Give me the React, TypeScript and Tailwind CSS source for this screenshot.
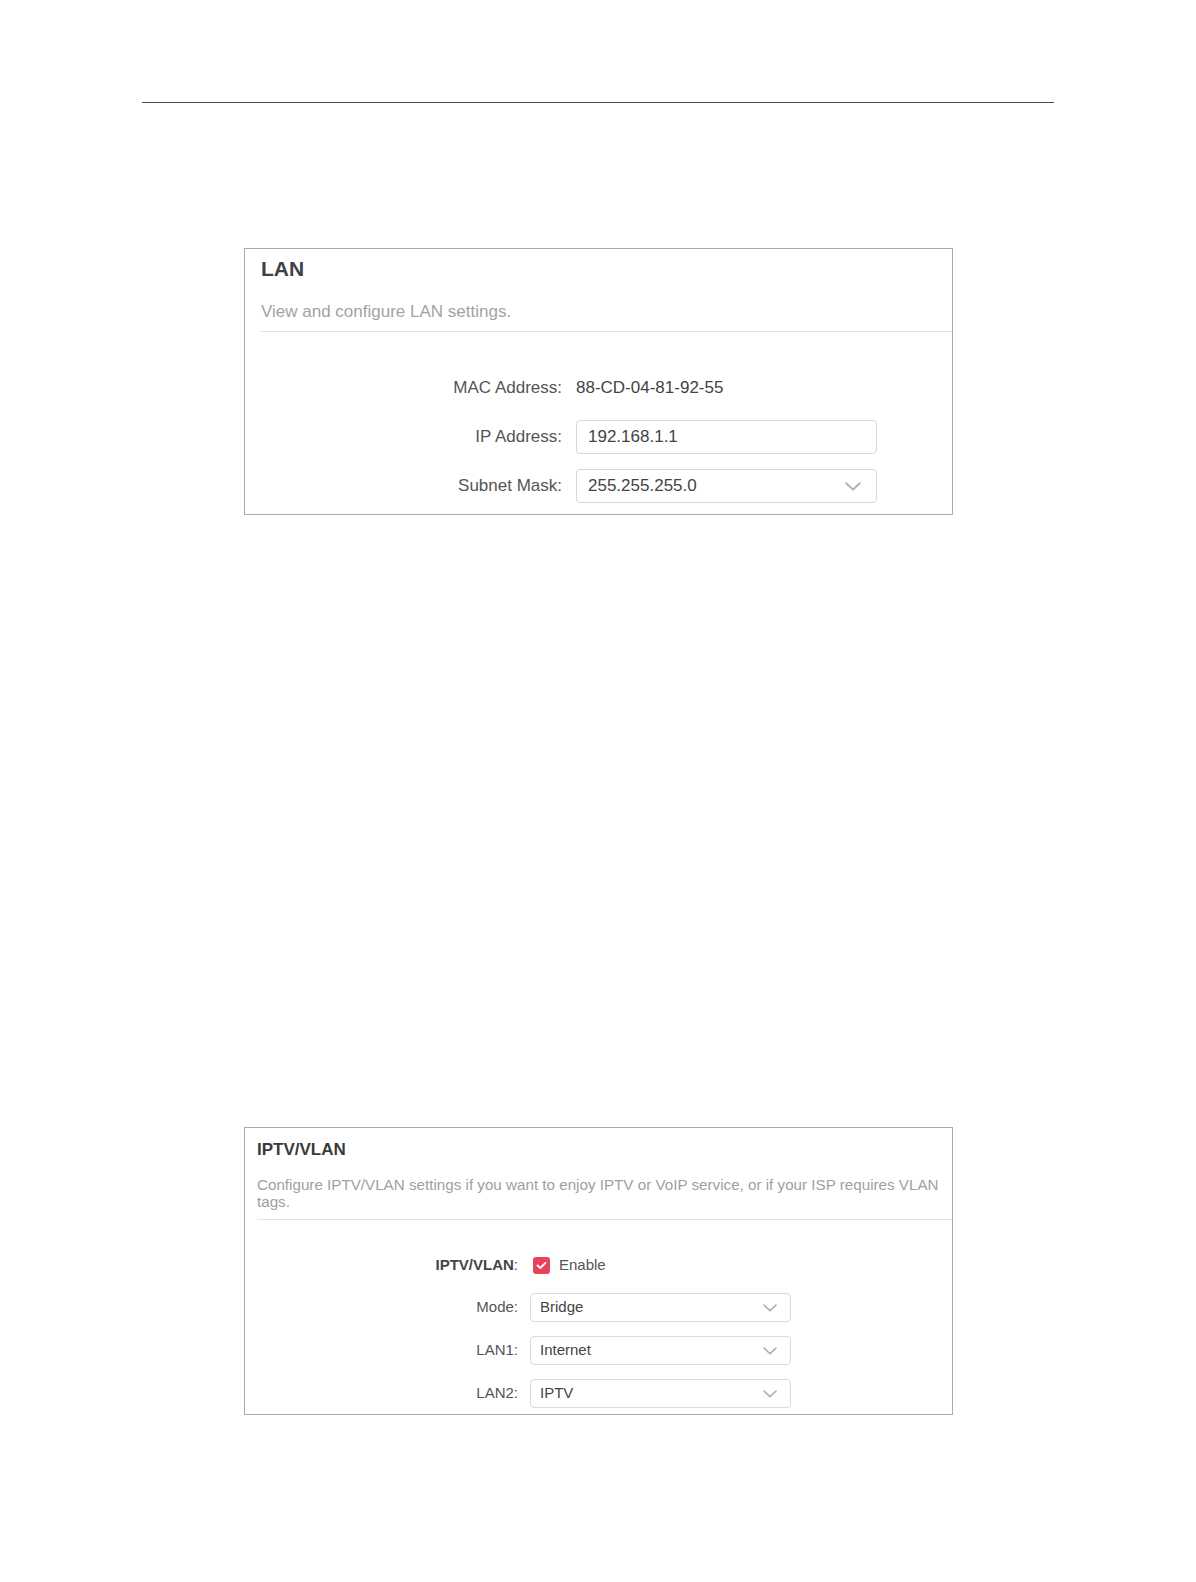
const Chevron = ({ size = "lg" }: { size?: "lg" | "sm" }) => (
  <svg
    width={size === "lg" ? 16 : 14}
    height={size === "lg" ? 9 : 8}
    viewBox="0 0 16 9"
    fill="none"
    className="shrink-0"
  >
    <polyline points="1.2,1.2 8,7.6 14.8,1.2" stroke="#b3b3b3" strokeWidth="2" strokeLinecap="round" strokeLinejoin="round" />
  </svg>
);

const LanRow = ({ label, children }: { label: string; children: React.ReactNode }) => (
  <div className="flex h-[34px] items-center gap-[14px]">
    <span className="w-[317px] shrink-0 text-right text-[17px] text-[#555]">{label}</span>
    {children}
  </div>
);

const VlanRow = ({ label, children }: { label: React.ReactNode; children: React.ReactNode }) => (
  <div className="flex h-[29px] items-center gap-[12px]">
    <span className="w-[273px] shrink-0 text-right text-[15px] text-[#555]">{label}</span>
    {children}
  </div>
);

const VlanSelect = ({ value }: { value: string }) => (
  <div className="flex h-[29px] w-[261px] items-center justify-between rounded-[4px] border border-[#dadada] pl-[9px] pr-[13px] text-[15px] text-[#444]">
    <span>{value}</span>
    <Chevron size="sm" />
  </div>
);

export default function App() {
  return (
    <div className="min-h-[1582px] bg-white pt-[102px] font-['Liberation_Sans',Arial,sans-serif]">
      <div className="mx-[142px] h-px bg-[#4a4a4a]" />

      <div className="ml-[244px] mt-[145px] w-[709px] border border-[#ababab] pb-[11px]">
        <h2 className="pl-[16px] pt-[8px] text-[21px] font-bold leading-[24px] text-[#3d4147]">LAN</h2>
        <p className="mt-[21px] pl-[16px] text-[17px] leading-[20px] text-[#a3a3a3]">View and configure LAN settings.</p>
        <div className="ml-[16px] mt-[9px] h-px bg-[#e2e2e2]" />
        <div className="flex flex-col gap-[15px] pt-[39px]">
          <LanRow label="MAC Address:">
            <span className="text-[17px] text-[#444]">88-CD-04-81-92-55</span>
          </LanRow>
          <LanRow label="IP Address:">
            <div className="flex h-[34px] w-[301px] items-center rounded-[4px] border border-[#d6d6d6] pl-[11px] text-[17px] text-[#444]">
              192.168.1.1
            </div>
          </LanRow>
          <LanRow label="Subnet Mask:">
            <div className="flex h-[34px] w-[301px] items-center justify-between rounded-[4px] border border-[#d6d6d6] pl-[11px] pr-[15px] text-[17px] text-[#444]">
              <span>255.255.255.0</span>
              <Chevron />
            </div>
          </LanRow>
        </div>
      </div>

      <div className="ml-[244px] mt-[612px] w-[709px] border border-[#ababab] pb-[6px]">
        <h2 className="pl-[12px] pt-[12px] text-[17px] font-bold leading-[20px] text-[#3a3a3a]">IPTV/VLAN</h2>
        <p className="mt-[16px] pl-[12px] pr-[12px] text-[15.2px] leading-[17px] text-[#a0a0a0]">
          Configure IPTV/VLAN settings if you want to enjoy IPTV or VoIP service, or if your ISP requires VLAN tags.
        </p>
        <div className="ml-[12px] mt-[9px] h-px bg-[#e2e2e2]" />
        <div className="flex flex-col gap-[14px] pt-[31px]">
          <VlanRow
            label={
              <>
                <span className="font-bold text-[#444]">IPTV/VLAN</span>:
              </>
            }
          >
            <div className="flex items-center gap-[9px] pl-[3px]">
              <span className="flex h-[17px] w-[17px] items-center justify-center rounded-[3px] bg-[#e8435d]">
                <svg width="11" height="9" viewBox="0 0 11 9" fill="none">
                  <polyline points="1.5,4.5 4.3,7 9.5,1.8" stroke="white" strokeWidth="1.8" strokeLinecap="round" strokeLinejoin="round" />
                </svg>
              </span>
              <span className="text-[15px] text-[#555]">Enable</span>
            </div>
          </VlanRow>
          <div className="-mt-px">
            <VlanRow label="Mode:">
              <VlanSelect value="Bridge" />
            </VlanRow>
          </div>
          <VlanRow label="LAN1:">
            <VlanSelect value="Internet" />
          </VlanRow>
          <VlanRow label="LAN2:">
            <VlanSelect value="IPTV" />
          </VlanRow>
        </div>
      </div>
    </div>
  );
}
